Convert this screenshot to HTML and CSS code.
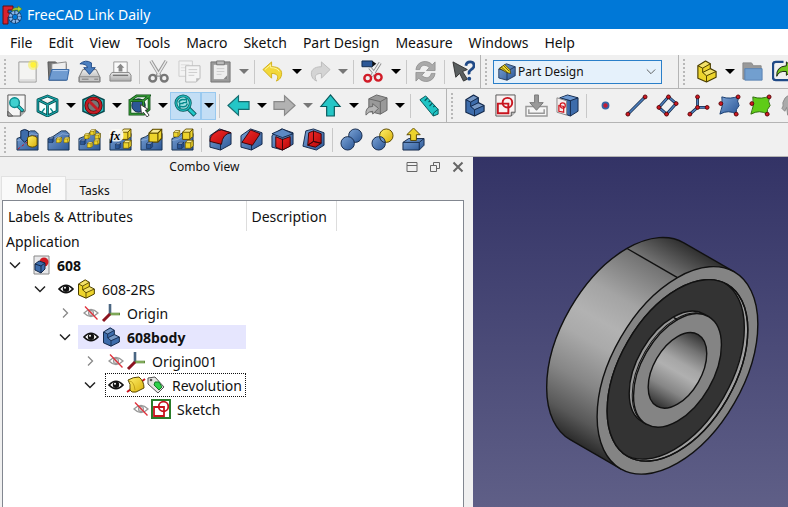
FILE: index.html
```html
<!DOCTYPE html>
<html lang="en">
<head>
    <meta charset="UTF-8">
    <meta name="viewport" content="width=device-width, initial-scale=1.0">
    <title>FreeCAD Link Daily</title>
    <link rel="stylesheet" href="styles.css">
</head>
<body>
    <!-- shared icons -->
    <svg class="defs" width="0" height="0" aria-hidden="true">
        <defs>
            <linearGradient id="blue" x1="0" y1="0" x2="1" y2="1"><stop offset="0" stop-color="#7ba3d6"/><stop offset="1" stop-color="#2c5796"/></linearGradient>
            <linearGradient id="yellow" x1="0" y1="0" x2="1" y2="1"><stop offset="0" stop-color="#fff06a"/><stop offset="1" stop-color="#d9b00c"/></linearGradient>
            <linearGradient id="red" x1="0" y1="0" x2="1" y2="1"><stop offset="0" stop-color="#f02b2b"/><stop offset="1" stop-color="#b80808"/></linearGradient>
            <linearGradient id="grey" x1="0" y1="0" x2="0" y2="1"><stop offset="0" stop-color="#ececec"/><stop offset="1" stop-color="#a9a9a9"/></linearGradient>
            <linearGradient id="side" x1="0" y1="0" x2="0" y2="1">
                <stop offset="0" stop-color="#303030"/><stop offset=".14" stop-color="#707070"/>
                <stop offset=".35" stop-color="#a4a4a4"/><stop offset=".48" stop-color="#b2b2b2"/><stop offset=".58" stop-color="#aaa"/>
                <stop offset=".75" stop-color="#868686"/><stop offset=".9" stop-color="#585858"/><stop offset="1" stop-color="#2b2b2b"/>
            </linearGradient>
            <linearGradient id="bore" x1="0" y1="0" x2="0" y2="1">
                <stop offset="0" stop-color="#333"/><stop offset=".2" stop-color="#747474"/><stop offset=".4" stop-color="#a6a6a6"/>
                <stop offset=".52" stop-color="#b0b0b0"/><stop offset=".75" stop-color="#868686"/><stop offset="1" stop-color="#303030"/>
            </linearGradient>
        </defs>
        <symbol id="drop" viewBox="0 0 10 5"><path d="M0 0h10L5 5z"/></symbol>
        <symbol id="steps" viewBox="0 0 24 24">
            <path d="M3 6l8-5 5 3v5l6 3v6l-10 5-9-4z" stroke-width="1.2" stroke-linejoin="round"/>
            <path d="M4 6l7-4 4 2-7 4zM9 13l7-3 5 2-9 4z" fill="#fff" fill-opacity=".3" stroke="none"/>
            <path d="M3 6l5 2.500 8-4.500M8 8.500V13l8-4M8 13l4 3.500 10-4.500M12 16.500V23" fill="none" stroke-width="1"/>
        </symbol>
        <symbol id="chev-down" viewBox="0 0 12 12"><path d="M1 3.500l5 5 5-5" fill="none" stroke="#222" stroke-width="1.500"/></symbol>
        <symbol id="chev-right" viewBox="0 0 12 12"><path d="M4 1.500l4.500 4.500L4 10.500" fill="none" stroke="#888" stroke-width="1.300"/></symbol>
        <symbol id="eye" viewBox="0 0 16 16">
            <path d="M1 8Q8 .5 15 8 8 15.500 1 8z" fill="#fff" stroke="#111" stroke-width="1.700"/>
            <circle cx="8" cy="7.800" r="3.200" fill="#111"/><circle cx="7" cy="6.800" r="1" fill="#fff"/>
        </symbol>
        <symbol id="eye-off" viewBox="0 0 16 16">
            <path d="M1 8Q8 1 15 8 8 15 1 8z" fill="#fff" stroke="#999" stroke-width="1.300"/>
            <circle cx="8" cy="8" r="2.700" fill="#ccc" stroke="#999"/>
            <path d="M2 1.500L14.500 14.500" stroke="#e0303a" stroke-width="1.300"/>
        </symbol>
        <symbol id="axes" viewBox="0 0 20 20">
            <path d="M9 11V1" stroke="#4a6682" stroke-width="2.600"/><path d="M9 11h10" stroke="#5f8a3a" stroke-width="2.600"/><path d="M10 11h8" stroke="#a0c878"/>
            <path d="M9 11l-7 7" stroke="#8c1420" stroke-width="3"/>
        </symbol>
        <symbol id="wedge" viewBox="0 0 24 24">
            <path d="M1 11L6 9 15 3h5l3 3v17H1z" fill="url(#blue)" stroke="#16304f"/>
            <path d="M1 13l6-1 9-6 7 1" fill="none" stroke="#a8c4e6" stroke-opacity=".6"/>
        </symbol>
        <symbol id="cube" viewBox="0 0 12 12">
            <path d="M1 4l3-3h7v7l-3 3H1z" stroke-width=".9"/><path d="M1 4h7v7M8 4l3-3" fill="none" stroke-width=".9"/>
            <path d="M2 3.500L4.300 1.500h5.500L7.800 3.500z" fill="#fff" fill-opacity=".5" stroke="none"/>
        </symbol>
        <symbol id="solid" viewBox="0 0 24 24">
            <path d="M1 8l10-7 12 4v12L12 23 1 20z" fill="url(#blue)" stroke="#14294a"/>
            <path d="M12 11v12" stroke="#14294a"/>
        </symbol>
    </svg>

    <header class="titlebar">
        <svg width="20" height="20" viewBox="0 0 20 20">
            <path d="M1 1h10v4H6v3h4v4H6v7H1z" fill="#d8232e" stroke="#650d12"/>
            <circle cx="13" cy="12" r="4.500" fill="none" stroke="#16406f" stroke-width="4.500"/>
            <circle cx="13" cy="12" r="4.500" fill="none" stroke="#88b5e8" stroke-width="3" stroke-dasharray="2.500 1"/>
            <path d="M10 6q1-4 6-3V1l4 3-4 3V5q-3-.5-6 1z" fill="#a8d33c" stroke="#4d7a14" stroke-width=".6"/>
        </svg>
        <span>FreeCAD Link Daily</span>
    </header>

    <nav class="menubar">
        <a href="#">File</a>
        <a href="#">Edit</a>
        <a href="#">View</a>
        <a href="#">Tools</a>
        <a href="#">Macro</a>
        <a href="#">Sketch</a>
        <a href="#">Part Design</a>
        <a href="#">Measure</a>
        <a href="#">Windows</a>
        <a href="#">Help</a>
    </nav>

    <div class="toolrow">
        <div class="toolbar">
            <span class="grip"></span>
            <button class="tool" aria-label="New"><svg viewBox="0 0 24 24"><path d="M3 2h18v21H3z" fill="#f4f4f2" stroke="#999"/><path d="M4 20h16v2H4z" fill="#ddd"/><circle cx="18" cy="5" r="5.500" fill="#f8ee4a" fill-opacity=".55"/><circle cx="18" cy="5" r="3" fill="#fff23a"/></svg></button>
            <button class="tool" aria-label="Open"><svg viewBox="0 0 24 24"><path d="M1 2h8l2 2h9v17H2z" fill="#777" stroke="#555"/><path d="M5 4l15-2v8H5z" fill="#eee" stroke="#888"/><path d="M5 10h18l-2 11H2z" fill="#6f9bd0" stroke="#3465a4"/><path d="M6 11h15.500" stroke="#b4cff0"/></svg></button>
            <button class="tool" aria-label="Save"><svg viewBox="0 0 24 24"><path d="M5 10h14l4 8v5H1v-5z" fill="url(#grey)" stroke="#777"/><path d="M1.500 17.500h21v5h-21z" fill="#c4c4c4" stroke="#888"/><path d="M4 20h7M17 20h4" stroke="#777"/><path d="M2 4Q8-1 14 3v5h4l-6 7-6-7h4Q9 4 2 4z" fill="#4b7fc0" stroke="#204a87"/></svg></button>
            <button class="tool" aria-label="Print"><svg viewBox="0 0 24 24"><path d="M5 2h14v12H5z" fill="#fafafa" stroke="#999"/><path d="M12 4l4 4h-2v4h-4V8H8z" fill="#888"/><path d="M3 13h18l2 3v6H1v-6z" fill="url(#grey)" stroke="#888"/><path d="M4 16h16" stroke="#777" stroke-width="1.500"/></svg></button>
            <span class="sep"></span>
            <button class="tool" aria-label="Cut"><svg viewBox="0 0 24 24"><path d="M4 1l10 16M20 1L10 17" stroke="#999" stroke-width="3.500"/><path d="M4 1l9 15M20 1l-9 15" stroke="#e8e8e8" stroke-width="1.500"/><circle cx="6" cy="19" r="3.500" fill="none" stroke="#777" stroke-width="2.500"/><circle cx="18" cy="19" r="3.500" fill="none" stroke="#777" stroke-width="2.500"/></svg></button>
            <button class="tool" aria-label="Copy"><svg viewBox="0 0 24 24"><path d="M1 1h14v16H1z" fill="#f3f3f3" stroke="#ccc"/><path d="M3 5h9M3 8h5M3 11h5" stroke="#ddd"/><path d="M8 6h15v13l-4 4H8z" fill="#f4f4f4" stroke="#bbb"/><path d="M11 10h9M11 13h9M11 16h6" stroke="#ccc"/><path d="M19 23v-4h4" fill="#bbb"/></svg></button>
            <button class="tool" aria-label="Paste"><svg viewBox="0 0 24 24"><path d="M2 2h20v21H2z" fill="#999" stroke="#777"/><path d="M5 5h14v15H5z" fill="#eee"/><path d="M8 1h8v4H8z" fill="#bbb" stroke="#777"/><path d="M8 9h8M8 12h8M8 15h5" stroke="#ccc"/><path d="M15 20l4-4v4z" fill="#888"/></svg></button>
            <button class="more dim" aria-label="Paste options"><svg><use href="#drop"/></svg></button>
            <span class="sep"></span>
            <button class="tool" aria-label="Undo"><svg viewBox="0 0 24 24"><path d="M1 10l9-8v5c8 0 12 4 10 10-1 3-3 4-5 5 3-5 1-8-5-8v5z" fill="#f2d83a" stroke="#d1b019"/><path d="M3 10l6-5v3q7 0 9 4" fill="none" stroke="#fff3a0"/></svg></button>
            <button class="more" aria-label="Undo list"><svg><use href="#drop"/></svg></button>
            <button class="tool" aria-label="Redo"><svg viewBox="0 0 24 24"><path d="M23 10l-9-8v5C6 7 2 11 4 17c1 3 3 4 5 5-3-5-1-8 5-8v5z" fill="#d4d4d4" stroke="#bbb"/></svg></button>
            <button class="more dim" aria-label="Redo list"><svg><use href="#drop"/></svg></button>
            <span class="sep"></span>
            <button class="tool" aria-label="Clipping"><svg viewBox="0 0 24 24"><path d="M20 3l-9 14M9 8l7 8" stroke="#888" stroke-width="3.500"/><path d="M20 3l-9 14M9 8l7 8" stroke="#eee" stroke-width="1.800"/><path d="M1 1h11v6H1z" fill="#2c5796" stroke="#122b4d"/><path d="M12 1l4 3-4 3z" fill="#111"/><circle cx="7" cy="19" r="3.500" fill="none" stroke="#d11c28" stroke-width="2.500"/><circle cx="18" cy="18" r="3.500" fill="none" stroke="#d11c28" stroke-width="2.500"/></svg></button>
            <button class="more" aria-label="Clipping options"><svg><use href="#drop"/></svg></button>
            <span class="sep"></span>
            <button class="tool" aria-label="Refresh"><svg viewBox="0 0 24 24"><path d="M2 10C3 1 14-1 19 5l3-3v9h-9l3-3C12 4 7 5 6 10zM22 14c-1 9-12 11-17 5l-3 3v-9h9l-3 3c4 4 9 3 10-2z" fill="#aaa" stroke="#8c8c8c" stroke-width=".8"/></svg></button>
            <span class="sep"></span>
            <button class="tool" aria-label="What's this"><svg viewBox="0 0 24 24"><path d="M1 2l15 8-5 2 5 8-4 2-4-8-4 4z" fill="#5a5f60" stroke="#333"/><path d="M14.500 6Q15 2 19 2t4 4q0 2-3 4t-2 5" fill="none" stroke="#204a87" stroke-width="2.800"/><circle cx="18" cy="19.500" r="2" fill="#204a87"/></svg></button>
        </div>
        <div class="toolbar workbench">
            <span class="grip"></span>
            <div class="combo">
                <svg viewBox="0 0 24 24"><use href="#solid"/><path d="M1 8l11 3 11-6" fill="none" stroke="#14294a"/><path d="M2 7l7-5 7 7 1 5-5-1z" fill="#f0d92c" stroke="#4a3d00"/><path d="M4 5l9 8M7 3l8 8" stroke="#4a3d00"/></svg>
                <select aria-label="Workbench"><option>Part Design</option></select>
                <svg class="combo-arrow" viewBox="0 0 12 12"><path d="M1 3l5 5 5-5" fill="none" stroke="#444"/></svg>
            </div>
        </div>
        <div class="toolbar">
            <span class="grip"></span>
            <button class="tool" aria-label="Create part"><svg viewBox="0 0 24 24" fill="#edd42c" stroke="#4a3d00"><use href="#steps"/></svg></button>
            <button class="more" aria-label="Part options"><svg><use href="#drop"/></svg></button>
            <button class="tool" aria-label="Create group"><svg viewBox="0 0 24 24"><path d="M2 3h9l2 3h8v14H2z" fill="#999" stroke="#888"/><path d="M4 9h18v12H4z" fill="#729fcf" stroke="#5a83b3"/></svg></button>
            <button class="tool" aria-label="Make link"><svg viewBox="0 0 24 24"><path d="M12 2H4Q1 2 1 5v13q0 3 3 3h14q3 0 3-3" fill="none" stroke="#204a87" stroke-width="2.500"/><path d="M5 17Q4 7 15 6V2l8 7-8 7v-4Q7 11 5 17z" fill="#73c81e" stroke="#17230c"/></svg></button>
        </div>
    </div>

    <div class="toolrow">
        <div class="toolbar nogrip">
            <button class="tool" aria-label="Fit all"><svg viewBox="0 0 24 24"><path d="M3 1h18v17l-5 5H3z" fill="#f5f5f5" stroke="#555"/><path d="M3 18v5h5zM16 23v-5h5" fill="#aaa" stroke="#555"/><path d="M13 12l6 6" stroke="#07575a" stroke-width="3.500"/><path d="M13 12l5.500 5.500" stroke="#20c8c8" stroke-width="2"/><circle cx="10" cy="9" r="5" fill="#3fd0cf" stroke="#08898c" stroke-width="1.500"/></svg></button>
            <button class="tool" aria-label="Isometric"><svg viewBox="0 0 24 24"><path d="M2 6l10-4 10 4v12l-10 5-10-5zM2 6l10 5 10-5M12 11v12" fill="#f4ffff" stroke="#06484c" stroke-width="2.800" stroke-linejoin="round"/><path d="M2 6l10-4 10 4v12l-10 5-10-5zM2 6l10 5 10-5M12 11v12" fill="none" stroke="#18a8aa" stroke-width="1.200"/><path d="M6 19l3-4M18 19l-3-4" stroke="#08898c" stroke-width="1.500"/></svg></button>
            <button class="more" aria-label="Standard views"><svg><use href="#drop"/></svg></button>
            <button class="tool" aria-label="Draw style"><svg viewBox="0 0 24 24"><path d="M1 6l11-5 11 5v12l-11 5-11-5z" fill="#2abcc0" stroke="#06484c" stroke-width="1.500"/><circle cx="12" cy="12" r="7.500" fill="#777" stroke="#4a0808" stroke-width="4"/><circle cx="12" cy="12" r="7.500" fill="none" stroke="#c41c24" stroke-width="2.400"/><path d="M7 7l10 10" stroke="#c41c24" stroke-width="3"/></svg></button>
            <button class="more" aria-label="Draw styles"><svg><use href="#drop"/></svg></button>
            <button class="tool" aria-label="Select"><svg viewBox="0 0 24 24"><path d="M3 6l7-4h12v14l-6 5H3z" fill="#edf8ed"/><circle cx="11" cy="12" r="7" fill="#2c5796" stroke="#14294a"/><path d="M2 7h14v14H2zM2 7l7-5h13l-6 5M22 2v14l-6 5" fill="none" stroke="#0f4a16" stroke-width="2.800"/><path d="M2 7h14v14H2zM2 7l7-5h13l-6 5M22 2v14l-6 5" fill="none" stroke="#38a038" stroke-width="1.200"/><path d="M13 11l8 5-3 1 4 5-2 2-4-5-2 2z" fill="#fff" stroke="#333"/></svg></button>
            <button class="more" aria-label="Selection modes"><svg><use href="#drop"/></svg></button>
            <button class="tool hot" aria-label="Zoom selection"><svg viewBox="0 0 24 24"><path d="M14 14l8 8" stroke="#07575a" stroke-width="5"/><path d="M14 14l7.500 7.500" stroke="#20c8c8" stroke-width="3"/><circle cx="9.500" cy="9.500" r="7.500" fill="#a4e4e6" stroke="#07575a" stroke-width="3"/><circle cx="9.500" cy="9.500" r="7.500" fill="none" stroke="#20b8ba" stroke-width="1.500"/><path d="M5 9q1-4 6-3l2-1v4H9M14 10q-1 4-6 3l-2 1v-4h4" fill="none" stroke="#07898c" stroke-width="1.500"/></svg></button>
            <button class="more hot" aria-label="Zoom modes"><svg><use href="#drop"/></svg></button>
            <span class="sep"></span>
            <button class="tool" aria-label="Back"><svg viewBox="0 0 24 24"><path d="M1 12L12 2v6h11v8H12v6z" fill="#25c6c6" stroke="#176d70" stroke-width="1.200"/></svg></button>
            <button class="more" aria-label="Back list"><svg><use href="#drop"/></svg></button>
            <button class="tool" aria-label="Forward"><svg viewBox="0 0 24 24"><path d="M23 12L12 2v6H1v8h11v6z" fill="#b2b2b2" stroke="#888" stroke-width="1.200"/></svg></button>
            <button class="more dim" aria-label="Forward list"><svg><use href="#drop"/></svg></button>
            <button class="tool" aria-label="Go up"><svg viewBox="0 0 24 24"><path d="M12 1l10 12h-6v10H8V13H2z" fill="#25c6c6" stroke="#07575a" stroke-width="1.200"/></svg></button>
            <button class="more" aria-label="Up list"><svg><use href="#drop"/></svg></button>
            <button class="tool" aria-label="Linked object"><svg viewBox="0 0 24 24"><path d="M4 5l8-4 11 3v13l-7 4-12-3z" fill="#999" stroke="#666"/><path d="M4 5l12 3 7-4M16 8v13" fill="none" stroke="#666"/><path d="M1 22q-1-9 7-9v-3l6 5-6 6v-3q-4 0-7 4z" fill="#b5b5b5" stroke="#666"/></svg></button>
            <button class="more" aria-label="Link actions"><svg><use href="#drop"/></svg></button>
            <span class="sep"></span>
            <button class="tool" aria-label="Measure"><svg viewBox="0 0 24 24"><path d="M2 6l6-4 13 14v5l-5 2z" fill="#1fc4c4" stroke="#07575a"/><path d="M21 16l-5 4v3" fill="none" stroke="#07575a"/><path d="M10 4l-3 3M12.500 7L11 8.500M15 9.500l-3 3M17.500 12L16 13.500" stroke="#07575a" stroke-width="1.300"/></svg></button>
        </div>
        <div class="toolbar">
            <span class="grip"></span>
            <button class="tool" aria-label="Create body"><svg viewBox="0 0 24 24" fill="#3d6cab" stroke="#14294a"><use href="#steps"/></svg></button>
            <button class="tool" aria-label="Create sketch"><svg viewBox="0 0 24 24"><path d="M2 1h20v18l-4 4H2z" fill="#f8f2f2" stroke="#555"/><path d="M18 23v-4h4" fill="#bbb" stroke="#555"/><path d="M4 10h11v10H4z" fill="none" stroke="#c8141e" stroke-width="2"/><circle cx="14" cy="9" r="5" fill="none" stroke="#c8141e" stroke-width="2"/></svg></button>
            <button class="tool" aria-label="Map sketch"><svg viewBox="0 0 24 24"><path d="M1 13h22v10H1z" fill="#f6f6f6" stroke="#999" stroke-width="1.500"/><path d="M4 16v4h16v-4" fill="none" stroke="#999" stroke-width="1.500"/><path d="M10 1h4v8h5l-7 8-7-8h5z" fill="#999" stroke="#777"/></svg></button>
            <button class="tool" aria-label="Sketch on face"><svg viewBox="0 0 24 24"><path d="M4 4l8-3 11 3v14l-8 5-11-4z" fill="#3d6cab" stroke="#14294a"/><path d="M5 4l7-2.500 10 3-7 2z" fill="#6c98d0"/><path d="M4 4l11 3 8-3M15 7v16" fill="none" stroke="#14294a"/><path d="M1 4l10 3v15L1 19z" fill="#f5eeee" stroke="#888"/><path d="M3 12l5 1v6l-5-1z" fill="none" stroke="#d01822" stroke-width="1.300"/><circle cx="7" cy="12" r="2.700" fill="none" stroke="#d01822" stroke-width="1.300"/></svg></button>
            <span class="sep"></span>
            <button class="tool" aria-label="Datum point"><svg viewBox="0 0 24 24"><circle cx="12" cy="12" r="3.200" fill="#c41c34" stroke="#3465a4" stroke-width="1.800"/></svg></button>
            <button class="tool" aria-label="Datum line"><svg viewBox="0 0 24 24"><path d="M3 21L21 3" stroke="#14294a" stroke-width="3"/><path d="M3 21L21 3" stroke="#4f80bd" stroke-width="1.500"/><g fill="#d01822" stroke="#5a080c"><circle cx="3" cy="21" r="2"/><circle cx="21" cy="3" r="2"/></g></svg></button>
            <button class="tool" aria-label="Datum plane"><svg viewBox="0 0 24 24"><path d="M13 3l8 7-10 11-8-7z" fill="none" stroke="#14294a" stroke-width="3"/><path d="M13 3l8 7-10 11-8-7z" fill="none" stroke="#4f80bd" stroke-width="1.500"/><g fill="#d01822" stroke="#5a080c"><circle cx="13" cy="3" r="2"/><circle cx="21" cy="10" r="2"/><circle cx="11" cy="21" r="2"/><circle cx="3" cy="14" r="2"/></g></svg></button>
            <button class="tool" aria-label="Local coordinate system"><svg viewBox="0 0 24 24"><path d="M11 3v11l-8 7M11 14h10" fill="none" stroke="#14294a" stroke-width="3"/><path d="M11 3v11l-8 7M11 14h10" fill="none" stroke="#4f80bd" stroke-width="1.500"/><g fill="#d01822" stroke="#5a080c"><circle cx="11" cy="3" r="2"/><circle cx="11" cy="14" r="2"/><circle cx="3" cy="21" r="2"/><circle cx="21" cy="14" r="2"/></g></svg></button>
            <button class="tool" aria-label="Shape binder"><svg viewBox="0 0 24 24"><path d="M4 3q9 3 18-1-3 6 0 10-4 4-3 9-8-5-17 0 4-9 2-18z" fill="url(#blue)" stroke="#14396e"/><g fill="#d01822" stroke="#5a080c"><circle cx="21" cy="3" r="2"/><circle cx="3" cy="10" r="2"/><circle cx="19" cy="21" r="2"/></g></svg></button>
            <button class="tool" aria-label="Sub-shape binder"><svg viewBox="0 0 24 24"><path d="M4 3q9 3 18-1-3 6 0 10-4 4-3 9-8-5-17 0 4-9 2-18z" fill="#5fcc18" stroke="#2c6a08"/><g fill="#d01822" stroke="#5a080c"><circle cx="21" cy="3" r="2"/><circle cx="3" cy="10" r="2"/><circle cx="19" cy="21" r="2"/></g></svg></button>
            <button class="tool" aria-label="Clone"><svg viewBox="0 0 24 24"><path d="M2 15q2-2 1-6 2-6 5-7l2 3 2-3 8 5v15H8l-1-8-2 4z" fill="#aaa" stroke="#888"/></svg></button>
        </div>
    </div>

    <div class="toolrow">
        <div class="toolbar">
            <span class="grip"></span>
            <button class="tool" aria-label="Transformed"><svg viewBox="0 0 24 24"><use href="#wedge"/><path d="M5 3q4-3 8 0v8l-4 4-4-4z" fill="#3d6cab" stroke="#14294a"/><path d="M2 22l20-15" stroke="#c8141e" stroke-dasharray="3 2"/><path d="M12 10q5-4 10 0v8q-5 4-10 0z" fill="url(#yellow)" stroke="#5a4800"/></svg></button>
            <button class="tool" aria-label="Linear pattern"><svg viewBox="0 0 24 24"><use href="#wedge"/><use href="#cube" x="1" y="9" width="7" height="7" fill="#2c5796" stroke="#14294a"/><g fill="#edd42c" stroke="#5a4800"><use href="#cube" x="9" y="9" width="7" height="7"/><use href="#cube" x="17" y="9" width="7" height="7"/></g></svg></button>
            <button class="tool" aria-label="Polar pattern"><svg viewBox="0 0 24 24"><use href="#wedge"/><use href="#cube" x="2" y="11" width="7" height="7" fill="#2c5796" stroke="#14294a"/><g fill="#edd42c" stroke="#5a4800"><use href="#cube" x="6" y="5" width="7" height="7"/><use href="#cube" x="12" y="1" width="7" height="7"/><use href="#cube" x="17" y="5" width="7" height="7"/><use href="#cube" x="16" y="11" width="7" height="7"/><use href="#cube" x="9" y="14" width="7" height="7"/></g></svg></button>
            <button class="tool" aria-label="Expression pattern"><svg viewBox="0 0 24 24"><use href="#wedge"/><g fill="#edd42c" stroke="#5a4800"><use href="#cube" x="11" y="0" width="13" height="13"/><use href="#cube" x="14" y="12" width="10" height="10"/></g><use href="#cube" x="6" y="15" width="7" height="7" fill="#2c5796" stroke="#14294a"/><rect x="0" y="1" width="15" height="13" rx="5" fill="#f8f8f4" fill-opacity=".9"/><text x="1" y="12" class="fx">fx</text></svg></button>
            <button class="tool" aria-label="Scaled"><svg viewBox="0 0 24 24"><use href="#wedge"/><use href="#cube" x="8" y="0" width="16" height="16" fill="#edd42c" stroke="#5a4800"/><use href="#cube" x="6" y="14" width="8" height="8" fill="#2c5796" stroke="#14294a"/></svg></button>
            <button class="tool" aria-label="Multi transform"><svg viewBox="0 0 24 24"><use href="#wedge"/><g fill="#edd42c" stroke="#5a4800"><use href="#cube" x="11" y="0" width="13" height="13"/><use href="#cube" x="2" y="2" width="8" height="8"/><use href="#cube" x="14" y="12" width="10" height="10"/></g><use href="#cube" x="6" y="14" width="8" height="8" fill="#2c5796" stroke="#14294a"/></svg></button>
            <span class="sep"></span>
            <button class="tool" aria-label="Fillet"><svg viewBox="0 0 24 24"><use href="#solid"/><path d="M1 14q0-6 5-9 4-3 7-3l10 3q-9 1-10 12z" fill="url(#red)" stroke="#3c0508"/></svg></button>
            <button class="tool" aria-label="Chamfer"><svg viewBox="0 0 24 24"><use href="#solid"/><path d="M2 15L11 2l10 4-8 12z" fill="url(#red)" stroke="#3c0508"/></svg></button>
            <button class="tool" aria-label="Draft"><svg viewBox="0 0 24 24"><use href="#solid"/><path d="M1 6l11-5 11 5-11 4z" fill="#5c89c4" stroke="#14294a"/><path d="M5 9l7 3v11l-7-3zM12 12l8-3v10l-8 4z" fill="url(#red)" stroke="#3c0508"/></svg></button>
            <button class="tool" aria-label="Thickness"><svg viewBox="0 0 24 24"><path d="M4 3l8-2 11 4v13l-8 5-14-4z" fill="url(#blue)" stroke="#14294a"/><path d="M7 5l5-2v11l-6 4zM12 3l8 3v10l-8-2zM12 14l8 2-6 4-8-2z" fill="url(#red)" stroke="#3c0508"/></svg></button>
            <span class="sep"></span>
            <button class="tool" aria-label="Boolean"><svg viewBox="0 0 24 24"><g fill="url(#blue)" stroke="#14294a"><circle cx="16" cy="8" r="7"/><circle cx="8" cy="16" r="7"/></g></svg></button>
            <button class="tool" aria-label="Boolean cut"><svg viewBox="0 0 24 24"><circle cx="8" cy="16" r="7" fill="url(#blue)" stroke="#14294a"/><circle cx="16" cy="8" r="7" fill="url(#yellow)" stroke="#5a4800"/><path d="M9 9q5 0 6 6-5 0-6-6z" fill="#6c93c4" stroke="#14294a"/></svg></button>
            <button class="tool" aria-label="Export"><svg viewBox="0 0 24 24"><path d="M1 15l6-4h16v7l-5 5H1z" fill="url(#blue)" stroke="#14294a"/><path d="M1 15h17v8M18 15l5-4" fill="none" stroke="#14294a"/><path d="M12 0l7 7h-4v6H9V7H5z" fill="#edd42c" stroke="#5a4800"/></svg></button>
        </div>
    </div>

    <main class="workspace">
        <section class="dock">
            <div class="dock-title">
                <h2>Combo View</h2>
                <button aria-label="Auto-hide"><svg viewBox="0 0 12 12"><path d="M1 1.500h10v9H1zM1 4.500h10"/></svg></button>
                <button aria-label="Float"><svg viewBox="0 0 12 12"><path d="M1.500 4.500h6v6h-6zM4.500 4.500v-3h6v6h-3"/></svg></button>
                <button aria-label="Close"><svg viewBox="0 0 12 12"><path d="M1.500 1.500l9 9M10.500 1.500l-9 9" stroke-width="2"/></svg></button>
            </div>
            <div class="tabs">
                <button class="tab active">Model</button>
                <button class="tab">Tasks</button>
            </div>
            <div class="panel">
                <table class="tree">
                    <thead>
                        <tr><th class="labels">Labels &amp; Attributes</th><th class="desc">Description</th><th></th></tr>
                    </thead>
                    <tbody>
                        <tr class="root"><td>Application</td><td></td><td></td></tr>
                        <tr><td><div class="item">
                            <button class="fold" aria-label="Collapse"><svg><use href="#chev-down"/></svg></button>
                            <span class="node bold"><svg class="icon" viewBox="0 0 20 20"><path d="M3 1h15v18H3z" fill="#e8e8ea" stroke="#888"/><circle cx="13" cy="7" r="4.500" fill="#cf1a22"/><path d="M4 9l4-3 6 2v6l-4 4-6-3z" fill="#3d6cab" stroke="#14294a"/><path d="M4 9l6 2 4-3M10 11v7" fill="none" stroke="#14294a"/></svg><span class="text">608</span></span>
                        </div></td><td></td><td></td></tr>
                        <tr><td><div class="item l1">
                            <button class="fold" aria-label="Collapse"><svg><use href="#chev-down"/></svg></button>
                            <span class="node eyed"><svg class="eye"><use href="#eye"/></svg><svg class="icon" viewBox="0 0 24 24" fill="#edd42c" stroke="#4a3d00"><use href="#steps"/></svg><span class="text">608-2RS</span></span>
                        </div></td><td></td><td></td></tr>
                        <tr><td><div class="item l2">
                            <button class="fold" aria-label="Expand"><svg><use href="#chev-right"/></svg></button>
                            <span class="node eyed"><svg class="eye"><use href="#eye-off"/></svg><svg class="icon"><use href="#axes"/></svg><span class="text">Origin</span></span>
                        </div></td><td></td><td></td></tr>
                        <tr><td><div class="item l2">
                            <button class="fold" aria-label="Collapse"><svg><use href="#chev-down"/></svg></button>
                            <span class="node eyed bold active"><svg class="eye"><use href="#eye"/></svg><svg class="icon" viewBox="0 0 24 24" fill="#3d6cab" stroke="#14294a"><use href="#steps"/></svg><span class="text">608body</span></span>
                        </div></td><td></td><td></td></tr>
                        <tr><td><div class="item l3">
                            <button class="fold" aria-label="Expand"><svg><use href="#chev-right"/></svg></button>
                            <span class="node eyed"><svg class="eye"><use href="#eye-off"/></svg><svg class="icon"><use href="#axes"/></svg><span class="text">Origin001</span></span>
                        </div></td><td></td><td></td></tr>
                        <tr><td><div class="item l3">
                            <button class="fold" aria-label="Collapse"><svg><use href="#chev-down"/></svg></button>
                            <span class="node eyed focus"><svg class="eye"><use href="#eye"/></svg><svg class="icon" viewBox="0 0 20 20"><path d="M1 17L19 4" stroke="#c8141e" stroke-width="2"/><path d="M2 5q5-3 11-3 5 4 5 11l-8 4q-5 1-6-2 1-6-2-10z" fill="url(#yellow)" stroke="#5a4800"/><path d="M3 6q5 0 6 9" fill="none" stroke="#b89410" stroke-width=".8"/></svg><svg class="icon" viewBox="0 0 20 20"><path d="M2 3l7-1 9 10-6 6L2 9z" fill="#e4e4e0" stroke="#555"/><circle cx="5" cy="5" r="1.300" fill="#555"/><path d="M9 7h4l3 5-3 3-5-5z" fill="#2ed14a" stroke="#157a28"/></svg><span class="text">Revolution</span></span>
                        </div></td><td></td><td></td></tr>
                        <tr><td><div class="item l4">
                            <span class="fold"></span>
                            <span class="node eyed"><svg class="eye"><use href="#eye-off"/></svg><svg class="icon" viewBox="0 0 20 20"><path d="M1 1h18v18H1z" fill="#fff" stroke="#2a7d2a" stroke-width="2"/><path d="M3 8h10v9H3z" fill="none" stroke="#c8141e" stroke-width="1.800"/><circle cx="12.500" cy="7.500" r="4.800" fill="none" stroke="#c8141e" stroke-width="1.800"/></svg><span class="text">Sketch</span></span>
                        </div></td><td></td><td></td></tr>
                    </tbody>
                </table>
            </div>
        </section>

        <section class="view3d">
            <!-- 608 bearing, drawn along its axis and turned 30 degrees -->
            <svg viewBox="0 0 316 351" role="img" aria-label="608 bearing">
                <clipPath id="seat"><ellipse rx="57.600" ry="99.700"/></clipPath>
                <g transform="translate(205 214) rotate(30)" stroke="#111" stroke-width="1.400" fill="none">
                    <path d="M0-114H-58.400A65.800 114 0 0 0-58.400 114H0z" fill="url(#side)"/>
                    <path d="M-46.500-80.600H-104.900"/>
                    <ellipse rx="65.800" ry="114" fill="#848484"/>
                    <ellipse rx="57.600" ry="99.700" fill="#a0a0a0"/>
                    <g clip-path="url(#seat)">
                        <ellipse cx="-4" rx="57.600" ry="99.700" fill="#333"/>
                    </g>
                    <ellipse rx="57.600" ry="99.700"/>
                    <path d="M0-62.300H-5A36 62.300 0 0 0-5 62.300H0z" fill="#999"/>
                    <ellipse cx="-1.500" rx="36" ry="62.300" stroke-width="1"/>
                    <ellipse rx="36" ry="62.300" fill="#848484"/>
                    <path d="M-25-44h-5"/>
                    <ellipse rx="24" ry="41.500" fill="url(#bore)"/>
                </g>
            </svg>
        </section>
    </main>
</body>
</html>
```

FILE: styles.css
```css
* {
    box-sizing: border-box;
}
body {
    margin: 0;
    height: 100vh;
    display: flex;
    flex-direction: column;
    overflow: hidden;
    font-family: "Noto Sans", "Open Sans", sans-serif;
    font-size: 14px;
    color: #111;
    background-color: #f0f0f0;
}
button {
    padding: 0;
    border: none;
    background: none;
    font: inherit;
    color: inherit;
}
.defs {
    position: absolute;
}
.titlebar {
    flex: none;
    display: flex;
    align-items: center;
    gap: 5px;
    height: 29px;
    padding-left: 2px;
    background-color: #0078d7;
    color: white;
}
.menubar {
    flex: none;
    display: flex;
    align-items: center;
    gap: 16px;
    height: 26px;
    padding: 0 10px;
    background-color: white;
}
.menubar a {
    color: #111;
    text-decoration: none;
    white-space: nowrap;
}

/* toolbars */
.toolrow {
    flex: none;
    display: flex;
    height: 34px;
    overflow: hidden;
    border-bottom: 1px solid #b4b4b4;
}
.toolbar {
    flex: none;
    display: flex;
    align-items: center;
    padding-right: 1px;
    border-right: 1px solid #b4b4b4;
}
.toolbar:last-child {
    border-right: none;
}
.nogrip {
    padding-left: 1px;
}
.workbench {
    padding-right: 16px;
}
.grip {
    width: 8px;
    height: 26px;
    margin-left: 4px;
    border-left: 2px dotted #b8b8b8;
}
.tool {
    display: flex;
    align-items: center;
    justify-content: center;
    width: 31px;
    height: 28px;
}
.tool svg {
    width: 23px;
    height: 23px;
}
.more {
    display: flex;
    align-items: center;
    justify-content: center;
    width: 15px;
    height: 28px;
}
.more svg {
    width: 10px;
    height: 5px;
}
.dim {
    fill: #777;
}
.hot {
    background-color: #c3def5;
    outline: 1px solid #99c9ef;
    outline-offset: -1px;
}
.sep {
    width: 7px;
    height: 24px;
    padding: 0 3px;
    background: #c8c8c8 content-box;
}
.fx {
    font: italic bold 13px "Liberation Serif", serif;
}
.combo {
    position: relative;
    width: 169px;
}
.combo select {
    display: block;
    width: 100%;
    height: 24px;
    padding: 0 24px;
    appearance: none;
    border: 1px solid #2a7fc9;
    border-radius: 0;
    background-color: #e5f1fb;
    font: 12px "Noto Sans", sans-serif;
    color: #111;
}
/* icon and arrow lie over the select */
.combo svg {
    position: absolute;
    left: 5px;
    top: 3px;
    width: 18px;
    height: 18px;
    pointer-events: none;
}
.combo .combo-arrow {
    left: auto;
    right: 6px;
    top: 7px;
    width: 10px;
    height: 10px;
}

/* main area */
.workspace {
    flex: 1;
    min-height: 0;
    display: grid;
    grid-template-columns: 3fr 2fr;
}
.dock {
    display: flex;
    flex-direction: column;
    min-width: 0;
    padding-right: 9px;
}
.dock-title {
    display: flex;
    align-items: center;
    gap: 11px;
    height: 19px;
}
.dock-title h2 {
    flex: 1;
    margin: 0;
    padding-left: 14px;
    font-size: 12px;
    font-weight: normal;
    text-align: center;
}
.dock-title button {
    display: flex;
}
.dock-title svg {
    width: 12px;
    height: 12px;
    fill: none;
    stroke: #666;
}
.tabs {
    display: flex;
    align-items: flex-end;
    height: 24px;
    padding-left: 1px;
    font-size: 12px;
}
.tab {
    height: 21px;
    padding: 0 12px;
    border: 1px solid #e2e2e2;
    border-bottom: none;
    background-color: #f2f2f2;
}
.tab.active {
    height: 24px;
    padding: 0 14px;
    background-color: #fafafa;
}
.panel {
    flex: 1;
    min-height: 0;
    margin-left: 2px;
    border: 1px solid #828790;
    border-bottom: none;
    background-color: white;
}
.tree {
    width: 100%;
    table-layout: fixed;
    border-collapse: collapse;
}
.tree th {
    height: 30px;
    padding: 0 5px;
    font-weight: normal;
    text-align: left;
    white-space: nowrap;
}
.tree .labels {
    width: 243px;
    border-right: 1px solid #ddd;
}
.tree .desc {
    width: 90px;
    border-right: 1px solid #ddd;
}
.tree td {
    height: 24px;
    padding: 0;
}
.tree .root td {
    height: 22px;
    padding-left: 3px;
    line-height: 22px;
}
.item {
    display: flex;
    align-items: center;
    height: 24px;
}
.l1 { padding-left: 25px; }
.l2 { padding-left: 50px; }
.l3 { padding-left: 75px; }
.l4 { padding-left: 100px; }
.fold {
    display: flex;
    justify-content: center;
    width: 25px;
    padding-right: 2px;
}
.fold svg {
    width: 12px;
    height: 12px;
}
.node {
    flex: 1;
    display: flex;
    align-items: center;
    height: 24px;
    padding-left: 3px;
    white-space: nowrap;
}
.eyed {
    padding-left: 5px;
}
.eye {
    width: 16px;
    height: 16px;
    margin-right: 2px;
}
.icon {
    width: 20px;
    height: 20px;
}
.text {
    margin-left: 6px;
}
.bold {
    font-weight: bold;
}
.node.active {
    background-color: #e6e6fe;
}
.node.focus {
    margin-left: 2px;
    padding-left: 3px;
    outline: 1px dotted #111;
    outline-offset: -1px;
}
.view3d {
    min-width: 0;
    min-height: 0;
    background: linear-gradient(#333366, #5f5f87);
}
.view3d svg {
    display: block;
    width: 100%;
    height: 100%;
}
```
